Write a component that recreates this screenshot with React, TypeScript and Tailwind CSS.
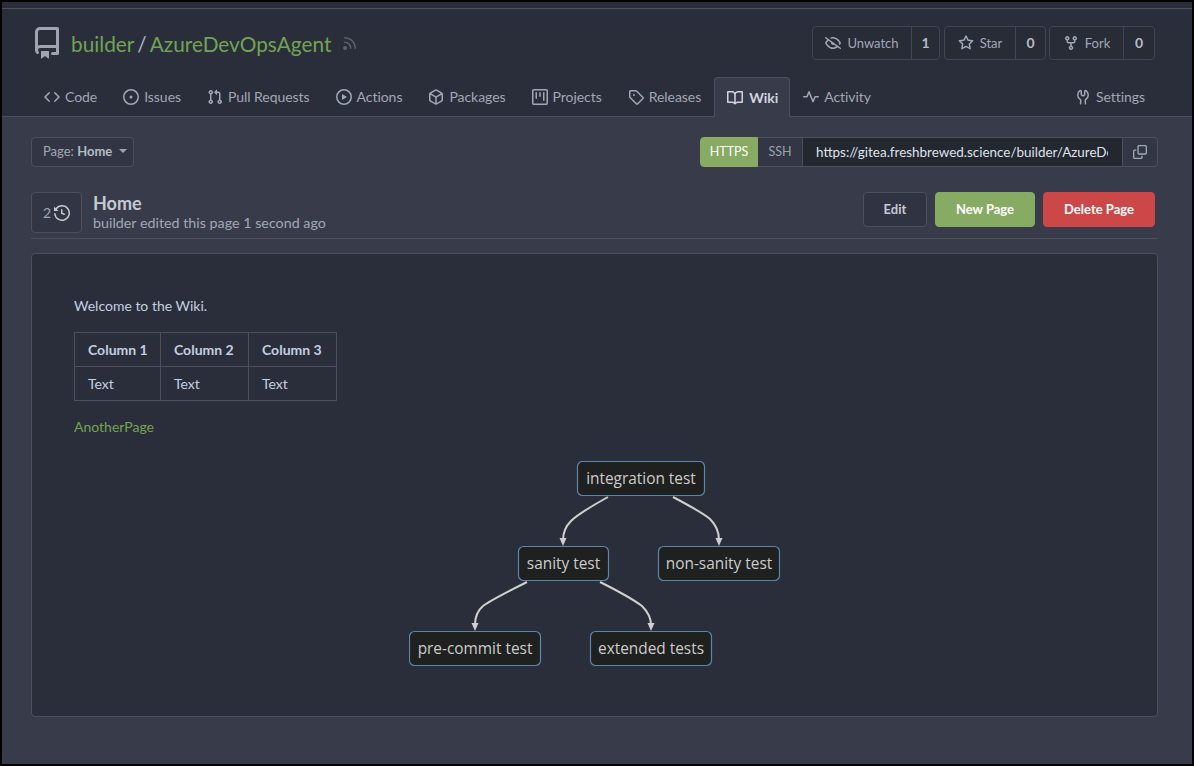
import React from 'react';

// 16px octicons, the set Gitea ships
const paths: Record<string, string> = {
  repo: 'M2 2.5A2.5 2.5 0 0 1 4.5 0h8.75a.75.75 0 0 1 .75.75v12.5a.75.75 0 0 1-.75.75h-2.5a.75.75 0 0 1 0-1.5h1.75v-2h-8a1 1 0 0 0-.714 1.7.75.75 0 1 1-1.072 1.05A2.495 2.495 0 0 1 2 11.5Zm10.5-1h-8a1 1 0 0 0-1 1v6.708A2.486 2.486 0 0 1 4.5 9h8ZM5 12.25a.25.25 0 0 1 .25-.25h3.5a.25.25 0 0 1 .25.25v3.25a.25.25 0 0 1-.4.2l-1.45-1.087a.249.249 0 0 0-.3 0L5.4 15.7a.25.25 0 0 1-.4-.2Z',
  rss: 'M2 2.75A.75.75 0 0 1 2.75 2C8.963 2 14 7.037 14 13.25a.75.75 0 0 1-1.5 0c0-5.385-4.365-9.75-9.75-9.75A.75.75 0 0 1 2 2.75Zm0 4.5a.75.75 0 0 1 .75-.75 6.75 6.75 0 0 1 6.75 6.75.75.75 0 0 1-1.5 0C8 10.35 5.65 8 2.75 8A.75.75 0 0 1 2 7.25ZM3 11a2 2 0 1 1-.001 3.999A2 2 0 0 1 3 11Z',
  code: 'm11.28 3.22 4.25 4.25a.75.75 0 0 1 0 1.06l-4.25 4.25a.749.749 0 0 1-1.275-.326.749.749 0 0 1 .215-.734L13.94 8l-3.72-3.72a.749.749 0 0 1 .326-1.275.749.749 0 0 1 .734.215Zm-6.56 0a.751.751 0 0 1 1.042.018.751.751 0 0 1 .018 1.042L2.06 8l3.72 3.72a.749.749 0 0 1-.326 1.275.749.749 0 0 1-.734-.215L.47 8.53a.75.75 0 0 1 0-1.06Z',
  issue: 'M8 9.5a1.5 1.5 0 1 0 0-3 1.5 1.5 0 0 0 0 3ZM8 0a8 8 0 1 1 0 16A8 8 0 0 1 8 0ZM1.5 8a6.5 6.5 0 1 0 13 0 6.5 6.5 0 0 0-13 0Z',
  pull: 'M1.5 3.25a2.25 2.25 0 1 1 3 2.122v5.256a2.251 2.251 0 1 1-1.5 0V5.372A2.25 2.25 0 0 1 1.5 3.25Zm5.677-.177L9.573.677A.25.25 0 0 1 10 .854V2.5h1A2.5 2.5 0 0 1 13.5 5v5.628a2.251 2.251 0 1 1-1.5 0V5a1 1 0 0 0-1-1h-1v1.646a.25.25 0 0 1-.427.177L7.177 3.427a.25.25 0 0 1 0-.354ZM3.75 2.5a.75.75 0 1 0 0 1.5.75.75 0 0 0 0-1.5Zm0 9.5a.75.75 0 1 0 0 1.5.75.75 0 0 0 0-1.5Zm8.25.75a.75.75 0 1 0 1.5 0 .75.75 0 0 0-1.5 0Z',
  play: 'M8 0a8 8 0 1 1 0 16A8 8 0 0 1 8 0ZM1.5 8a6.5 6.5 0 1 0 13 0 6.5 6.5 0 0 0-13 0Zm4.879-2.773 4.264 2.559a.25.25 0 0 1 0 .428l-4.264 2.559A.25.25 0 0 1 6 10.559V5.442a.25.25 0 0 1 .379-.215Z',
  pkg: 'm8.878.392 5.25 3.045c.54.314.872.89.872 1.514v6.098a1.75 1.75 0 0 1-.872 1.514l-5.25 3.045a1.75 1.75 0 0 1-1.756 0l-5.25-3.045A1.75 1.75 0 0 1 1 11.049V4.951c0-.624.332-1.201.872-1.514L7.122.392a1.75 1.75 0 0 1 1.756 0ZM7.875 1.69l-4.63 2.685L8 7.133l4.755-2.758-4.63-2.685a.248.248 0 0 0-.25 0ZM2.5 5.677v5.372c0 .09.047.171.125.216l4.625 2.683V8.432Zm6.25 8.271 4.625-2.683a.25.25 0 0 0 .125-.216V5.677L8.75 8.432Z',
  project: 'M1.75 0h12.5C15.216 0 16 .784 16 1.75v12.5A1.75 1.75 0 0 1 14.25 16H1.75A1.75 1.75 0 0 1 0 14.25V1.75C0 .784.784 0 1.75 0ZM1.5 1.75v12.5c0 .138.112.25.25.25h12.5a.25.25 0 0 0 .25-.25V1.75a.25.25 0 0 0-.25-.25H1.75a.25.25 0 0 0-.25.25ZM11.75 3a.75.75 0 0 1 .75.75v7.5a.75.75 0 0 1-1.5 0v-7.5a.75.75 0 0 1 .75-.75Zm-8.25.75a.75.75 0 0 1 1.5 0v5.5a.75.75 0 0 1-1.5 0ZM8 3a.75.75 0 0 1 .75.75v3.5a.75.75 0 0 1-1.5 0v-3.5A.75.75 0 0 1 8 3Z',
  tag: 'M1 7.775V2.75C1 1.784 1.784 1 2.75 1h5.025c.464 0 .91.184 1.238.513l6.25 6.25a1.75 1.75 0 0 1 0 2.474l-5.026 5.026a1.75 1.75 0 0 1-2.474 0l-6.25-6.25A1.752 1.752 0 0 1 1 7.775Zm1.5 0c0 .066.026.13.073.177l6.25 6.25a.25.25 0 0 0 .354 0l5.025-5.025a.25.25 0 0 0 0-.354l-6.25-6.25a.25.25 0 0 0-.177-.073H2.75a.25.25 0 0 0-.25.25ZM6 5a1 1 0 1 1 0 2 1 1 0 0 1 0-2Z',
  book: 'M0 1.75A.75.75 0 0 1 .75 1h4.253c1.227 0 2.317.59 3 1.501A3.743 3.743 0 0 1 11.006 1h4.245a.75.75 0 0 1 .75.75v10.5a.75.75 0 0 1-.75.75h-4.507a2.25 2.25 0 0 0-1.591.659l-.622.621a.75.75 0 0 1-1.06 0l-.622-.621A2.25 2.25 0 0 0 5.258 13H.75a.75.75 0 0 1-.75-.75Zm7.251 10.324.004-5.073-.002-2.253A2.25 2.25 0 0 0 5.003 2.5H1.5v9h3.757a3.75 3.75 0 0 1 1.994.574ZM8.755 4.75l-.004 7.322a3.752 3.752 0 0 1 1.992-.572H14.5v-9h-3.495a2.25 2.25 0 0 0-2.25 2.25Z',
  pulse: 'M6 2c.306 0 .582.187.696.471L10 10.731l1.304-3.26A.751.751 0 0 1 12 7h3.25a.75.75 0 0 1 0 1.5h-2.742l-1.812 4.528a.751.751 0 0 1-1.392 0L6 4.77 4.696 8.03A.75.75 0 0 1 4 8.5H.75a.75.75 0 0 1 0-1.5h2.742l1.812-4.529A.751.751 0 0 1 6 2Z',
  tools: 'M5.433 2.304A4.492 4.492 0 0 0 3.5 6c0 1.598.832 3.002 2.09 3.802.518.328.929.923.902 1.64v.008l-.164 3.337a.75.75 0 1 1-1.498-.073l.163-3.33c.002-.085-.05-.216-.207-.316A5.996 5.996 0 0 1 2 6a5.993 5.993 0 0 1 2.567-4.92 1.482 1.482 0 0 1 1.673-.04c.462.296.76.827.76 1.423v2.82c0 .082.041.16.11.206l.75.51a.25.25 0 0 0 .28 0l.75-.51A.249.249 0 0 0 9 5.282V2.463c0-.596.298-1.127.76-1.423a1.482 1.482 0 0 1 1.673.04A5.993 5.993 0 0 1 14 6a5.996 5.996 0 0 1-2.786 5.068c-.157.1-.209.23-.207.315l.163 3.33a.752.752 0 0 1-1.094.714.75.75 0 0 1-.404-.64l-.164-3.345c-.027-.717.384-1.312.902-1.64A4.495 4.495 0 0 0 12.5 6a4.492 4.492 0 0 0-1.933-3.696c-.024.017-.067.067-.067.16v2.818a1.75 1.75 0 0 1-.767 1.448l-.75.51a1.75 1.75 0 0 1-1.966 0l-.75-.51A1.75 1.75 0 0 1 5.5 5.282V2.463c0-.092-.043-.142-.067-.159Z',
  eyeClosed: 'M.143 2.31a.75.75 0 0 1 1.047-.167l14.5 10.5a.75.75 0 1 1-.88 1.214l-2.248-1.628C11.346 13.19 9.792 14 8 14c-1.981 0-3.67-.992-4.933-2.078C1.797 10.832.88 9.577.43 8.9a1.619 1.619 0 0 1 0-1.797c.353-.533.995-1.42 1.868-2.305L.31 3.357A.75.75 0 0 1 .143 2.31Zm1.536 5.622A.12.12 0 0 0 1.657 8c0 .021.006.045.022.068.412.621 1.242 1.75 2.366 2.717C5.175 11.758 6.527 12.5 8 12.5c1.195 0 2.31-.488 3.29-1.191L9.063 9.695A2 2 0 0 1 6.058 7.52L3.708 5.823a17.3 17.3 0 0 0-2.029 2.109ZM8 3.5c-.516 0-1.017.09-1.499.251a.75.75 0 1 1-.473-1.423A6.207 6.207 0 0 1 8 2c1.981 0 3.67.992 4.933 2.078 1.27 1.091 2.187 2.345 2.637 3.023a1.62 1.62 0 0 1 0 1.798c-.11.166-.248.365-.41.587a.75.75 0 1 1-1.21-.887c.148-.201.272-.382.371-.53a.119.119 0 0 0 0-.137c-.412-.621-1.242-1.75-2.366-2.717C10.825 4.242 9.473 3.5 8 3.5Z',
  star: 'M8 .25a.75.75 0 0 1 .673.418l1.882 3.815 4.21.612a.75.75 0 0 1 .416 1.279l-3.046 2.97.719 4.192a.751.751 0 0 1-1.088.791L8 12.347l-3.766 1.98a.75.75 0 0 1-1.088-.79l.72-4.194L.818 6.374a.75.75 0 0 1 .416-1.28l4.21-.611L7.327.668A.75.75 0 0 1 8 .25Zm0 2.445L6.615 5.5a.75.75 0 0 1-.564.41l-3.097.45 2.24 2.184a.75.75 0 0 1 .216.664l-.528 3.084 2.769-1.456a.75.75 0 0 1 .698 0l2.77 1.456-.53-3.084a.75.75 0 0 1 .216-.664l2.24-2.183-3.096-.45a.75.75 0 0 1-.564-.41L8 2.694Z',
  fork: 'M5 5.372v.878c0 .414.336.75.75.75h4.5a.75.75 0 0 0 .75-.75v-.878a2.25 2.25 0 1 1 1.5 0v.878a2.25 2.25 0 0 1-2.25 2.25h-1.5v2.128a2.251 2.251 0 1 1-1.5 0V8.5h-1.5A2.25 2.25 0 0 1 3.5 6.25v-.878a2.25 2.25 0 1 1 1.5 0ZM5 3.25a.75.75 0 1 0-1.5 0 .75.75 0 0 0 1.5 0Zm6.75.75a.75.75 0 1 0 0-1.5.75.75 0 0 0 0 1.5Zm-3 8.75a.75.75 0 1 0-1.5 0 .75.75 0 0 0 1.5 0Z',
  history: 'm.427 1.927 1.215 1.215a8.002 8.002 0 1 1-1.6 5.685.75.75 0 1 1 1.493-.154 6.5 6.5 0 1 0 1.18-4.458l1.358 1.358A.25.25 0 0 1 3.896 6H.25A.25.25 0 0 1 0 5.75V2.104a.25.25 0 0 1 .427-.177ZM7.75 4a.75.75 0 0 1 .75.75v2.992l2.028.812a.75.75 0 0 1-.557 1.392l-2.5-1A.751.751 0 0 1 7 8.25v-3.5A.75.75 0 0 1 7.75 4Z',
  copy: 'M0 6.75C0 5.784.784 5 1.75 5h1.5a.75.75 0 0 1 0 1.5h-1.5a.25.25 0 0 0-.25.25v7.5c0 .138.112.25.25.25h7.5a.25.25 0 0 0 .25-.25v-1.5a.75.75 0 0 1 1.5 0v1.5A1.75 1.75 0 0 1 9.25 16h-7.5A1.75 1.75 0 0 1 0 14.25ZM5 1.75C5 .784 5.784 0 6.75 0h7.5C15.216 0 16 .784 16 1.75v7.5A1.75 1.75 0 0 1 14.25 11h-7.5A1.75 1.75 0 0 1 5 9.25Zm1.75-.25a.25.25 0 0 0-.25.25v7.5c0 .138.112.25.25.25h7.5a.25.25 0 0 0 .25-.25v-7.5a.25.25 0 0 0-.25-.25Z',
};

const Octicon = ({ name, size = 16, className }: { name: string; size?: number; className?: string }) => (
  <svg width={size} height={size} viewBox="0 0 16 16" fill="currentColor" className={`shrink-0 ${className ?? ''}`}>
    <path d={paths[name]} />
  </svg>
);

const tabs = [
  { label: 'Code', icon: 'code' },
  { label: 'Issues', icon: 'issue' },
  { label: 'Pull Requests', icon: 'pull' },
  { label: 'Actions', icon: 'play' },
  { label: 'Packages', icon: 'pkg' },
  { label: 'Projects', icon: 'project' },
  { label: 'Releases', icon: 'tag' },
];

const Tab = ({ label, icon, active }: { label: string; icon: string; active?: boolean }) => (
  <a
    className={
      active
        ? 'flex items-center gap-[6px] pl-[12px] pr-[11px] h-[40px] bg-[#383c4a] border border-b-0 border-[#4c505c] rounded-t-[4px] text-[#d0d5de] font-bold'
        : 'flex items-center gap-[5px] px-[13px] h-[39px] text-[#a0a8b6]'
    }
  >
    <Octicon name={icon} />
    {label}
  </a>
);

const RepoButton = ({ label, icon, count, w, cw }: { label: string; icon: string; count: number; w: string; cw: string }) => (
  <div className="flex h-[34px] rounded-[4px] border border-[#404552] bg-[#282c37] text-[13px] text-[#a0a8b6]">
    <div className={`flex items-center justify-center gap-[6px] border-r border-[#404552] ${w}`}>
      <Octicon name={icon} />
      <span className="pt-[2px]">{label}</span>
    </div>
    <div className={`flex items-center justify-center pb-px text-[14px] font-bold text-[#b4bcc8] ${cw}`}>{count}</div>
  </div>
);

const Node = ({ x, y, w, label }: { x: number; y: number; w: number; label: string }) => (
  <g>
    <rect x={x + 0.5} y={y + 0.5} width={w} height={34} rx={5} fill="#1f2020" stroke="#5a86ab" strokeWidth={1.2} />
    <text x={x + w / 2 + 0.5} y={y + 23} textAnchor="middle" fontSize={15.4} fontWeight={500} fill="#cccccc">
      {label}
    </text>
  </g>
);

const Edge = ({ d, x, y }: { d: string; x: number; y: number }) => (
  <g>
    <path d={d} fill="none" stroke="#cfcfcf" strokeWidth={2} />
    <path d={`M${x - 3.5} ${y - 8}L${x + 3.5} ${y - 8}L${x} ${y}Z`} fill="#cfcfcf" />
  </g>
);

export default function App() {
  return (
    <div className="w-full h-[766px] overflow-hidden box-border border-2 border-black bg-[#383c4a] [font-family:Lato,sans-serif] text-[14px] text-[#b4bcc8]">
      <div className="h-[7px] bg-[#2a2e3a] border-b border-[#4c505c]" />

      <div className="bg-[#2a2e3a] border-b border-[#4c505c] h-[108px] pt-[17px] pl-[29px] pr-[34px]">
        <div className="flex items-start justify-between">
          <div className="flex items-center h-[34px]">
            <Octicon name="repo" size={32} className="text-[#a0a4ae]" />
            <div className="ml-[8px] flex items-center pt-[2px] text-[20.8px] text-[#72a355]">
              <span>builder</span>
              <span className="mx-[3px] text-[#a9b6cb]">/</span>
              <span>AzureDevOpsAgent</span>
            </div>
            <Octicon name="rss" className="ml-[11px] text-[#5f636e]" />
          </div>
          <div className="flex mr-[3px]">
            <RepoButton label="Unwatch" icon="eyeClosed" count={1} w="w-[99px]" cw="w-[27px]" />
            <div className="w-[4px]" />
            <RepoButton label="Star" icon="star" count={0} w="w-[71px]" cw="w-[29px]" />
            <div className="w-[3px]" />
            <RepoButton label="Fork" icon="fork" count={0} w="w-[74px]" cw="w-[30px]" />
          </div>
        </div>

        <nav className="flex items-start mt-[16px] h-[40px] pt-[1px] tracking-[-0.05px]">
          {tabs.map((t) => (
            <Tab key={t.label} label={t.label} icon={t.icon} />
          ))}
          <Tab label="Wiki" icon="book" active />
          <Tab label="Activity" icon="pulse" />
          <div className="ml-auto">
            <Tab label="Settings" icon="tools" />
          </div>
        </nav>
      </div>

      <main className="pt-[20px] pl-[29px] pr-[34px]">
        <div className="flex items-center justify-between h-[30px]">
          <button className="flex items-center h-[30px] w-[103px] pl-[11px] rounded-[4px] border border-[#4c505c] bg-[#323644] text-[13px] text-[#a0a8b6]">
            Page:&nbsp;<span className="font-bold text-[#b4bcc8]">Home</span>
            <span className="ml-[7px] mb-[3px] border-x-[4px] border-t-[4px] border-x-transparent border-t-[#a0a4ae]" />
          </button>
          <div className="flex h-[30px] text-[12.5px]">
            <div className="flex items-center justify-center w-[58px] pt-px bg-[#87ab63] rounded-l-[4px] border border-[#87ab63] text-white">HTTPS</div>
            <div className="flex items-center justify-center w-[45px] pt-px bg-[#333745] border-y border-r border-[#4c505c] text-[#9aa0ac]">SSH</div>
            <div className="w-[319px] flex items-center pl-[13px] pr-[14px] bg-[#232730] border-y border-[#4c505c] text-[13.45px] text-[#dfe3ea] overflow-hidden whitespace-nowrap">
              <span className="overflow-hidden">https://gitea.freshbrewed.science/builder/AzureDevOpsAgent.wiki.git</span>
            </div>
            <div className="flex items-center justify-center w-[36px] bg-[#333745] border border-[#4c505c] rounded-r-[4px] text-[#a0a8b6]">
              <Octicon name="copy" size={14} />
            </div>
          </div>
        </div>

        <div className="flex justify-between mt-[25px] pb-[5px] border-b border-[#4c505c]">
          <div className="flex">
            <div className="flex items-center justify-center gap-[3px] w-[51px] h-[41px] rounded-[4px] border border-[#4c505c] bg-[#323644] text-[14px] text-[#a0a8b6]">
              2<Octicon name="history" className="text-[#c4c8d0]" />
            </div>
            <div className="ml-[11px]">
              <div className="text-[18px] leading-[22px] font-bold text-[#c4cad4]">Home</div>
              <div className="text-[14.3px] leading-[18px] text-[#a0a8b8]">builder edited this page 1 second ago</div>
            </div>
          </div>
          <div className="flex gap-[8px] mr-[3px] h-[35px] text-[13px] font-bold">
            <button className="w-[64px] pt-px rounded-[4px] border border-[#4c505c] bg-[#2f3342] text-[#c4cad4]">Edit</button>
            <button className="w-[100px] pt-px rounded-[4px] border border-[#87ab63] bg-[#87ab63] text-white">New Page</button>
            <button className="w-[112px] pt-px rounded-[4px] border border-[#cc4848] bg-[#cc4848] text-white">Delete Page</button>
          </div>
        </div>

        <article className="mt-[14px] rounded-[4px] border border-[#4c505c] bg-[#2a2e3a] pt-[41px] pb-[49px] pl-[42px] text-[#c4cfe0]">
          <p className="leading-[21px]">Welcome to the Wiki.</p>
          <table className="mt-[16px] border-collapse leading-[21px]">
            <thead>
              <tr className="h-[34px]">
                <th className="w-[86px] pl-[13px] text-left font-bold border border-[#4c505c]">Column 1</th>
                <th className="w-[88px] pl-[13px] text-left font-bold border border-[#4c505c]">Column 2</th>
                <th className="w-[88px] pl-[13px] text-left font-bold border border-[#4c505c]">Column 3</th>
              </tr>
            </thead>
            <tbody>
              <tr className="h-[34px]">
                <td className="pl-[13px] border border-[#4c505c]">Text</td>
                <td className="pl-[13px] border border-[#4c505c]">Text</td>
                <td className="pl-[13px] border border-[#4c505c]">Text</td>
              </tr>
            </tbody>
          </table>
          <p className="mt-[15px] leading-[21px] text-[#72a355]">AnotherPage</p>

          <svg width={372} height={206} viewBox="409 461 372 206" className="block mt-[24px] ml-[335px] [font-family:Open_Sans,sans-serif]">
            <Edge d="M608 497C590 507 577 515 571 521C565 527 563 534 563 540" x={563} y={546} />
            <Edge d="M673 497C690 506 703 513 710 519C716 525 719 533 719 540" x={719} y={546} />
            <Edge d="M527 582C507 592 491 600 483 606C477 611 475 619 475 625" x={475} y={631} />
            <Edge d="M600 582C620 592 634 600 642 606C648 612 651 619 651 625" x={651} y={631} />
            <Node x={577} y={461} w={127} label="integration test" />
            <Node x={518} y={546} w={90} label="sanity test" />
            <Node x={658} y={546} w={121} label="non-sanity test" />
            <Node x={409} y={631} w={131} label="pre-commit test" />
            <Node x={590} y={631} w={121} label="extended tests" />
          </svg>
        </article>
      </main>
    </div>
  );
}
